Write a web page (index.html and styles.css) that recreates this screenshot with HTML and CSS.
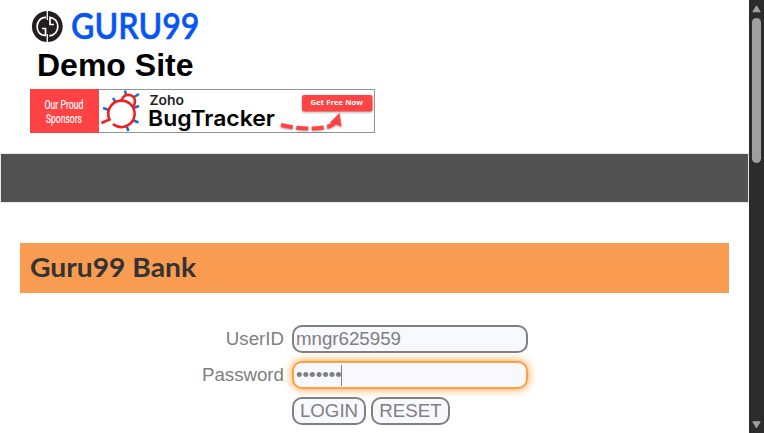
FILE: index.html
```html
<!DOCTYPE html>
<html lang="en">
<head>
<meta charset="utf-8">
<title>Guru99 Bank Home Page</title>
<link rel="stylesheet" href="styles.css">
</head>
<body>
<div class="window">
  <div class="page">
    <header class="header">
      <svg class="logo" width="180" height="44" viewBox="0 0 180 44">
        <circle cx="17.300" cy="26.500" r="15.400" fill="#231f20"/>
        <path d="M17.300 10.500V20M17.300 34V43" stroke="#fff" stroke-width="1.300"/>
        <path d="M16 17.300C4.500 17 4 36 15.500 35.500V28.500H12" fill="none" stroke="#fff" stroke-width="1.700"/>
        <path d="M19.300 35.800C30.500 35 30.500 18.500 20 17.300V24.500H24" fill="none" stroke="#fff" stroke-width="1.700"/>
        <text class="brand" x="41" y="38.500" textLength="128.500" lengthAdjust="spacingAndGlyphs">GURU99</text>
      </svg>
      <h1 class="demo">Demo Site</h1>
      <svg class="banner" width="345" height="44" viewBox="0 0 345 44">
        <rect x=".5" y=".5" width="344" height="43" fill="#fff" stroke="#939393"/>
        <rect width="69" height="44" fill="#ff4345"/>
        <g class="sponsor">
          <text x="14.500" y="19.500" textLength="39" lengthAdjust="spacingAndGlyphs">Our Proud</text>
          <text x="16" y="34" textLength="36" lengthAdjust="spacingAndGlyphs">Sponsors</text>
        </g>
        <g fill="none" stroke-width="2.600">
          <path d="M83 9l2.500 4M95 1.500l1 4.500M109 5l-5 3M73 19l6 2M109 17l-5.500 2M108.500 33.500l-6-2.500M98.500 42l-2-5" stroke="#1c73bd"/>
          <path d="M71.500 34l8-3.500a13.200 13.200 0 1 1 3.500 4.500M91.500 12.500c1-9 13-8.500 13.500-.5 0 3-1 5-2.500 6" stroke="#ed2024"/>
        </g>
        <text class="zoho" x="119.500" y="16" textLength="34.500" lengthAdjust="spacingAndGlyphs">Zoho</text>
        <text class="tracker" x="118" y="37.300" textLength="127" lengthAdjust="spacingAndGlyphs">BugTracker</text>
        <rect class="shadow" x="272" y="6" width="70.500" height="16.500" rx="2" fill="#ff4345"/>
        <text class="cta" x="280.500" y="16.300" textLength="52.500" lengthAdjust="spacingAndGlyphs">Get Free Now</text>
        <g class="shadow">
          <path d="M251 36q25 6 46 2 7-1.500 10-7" fill="none" stroke="#ff4345" stroke-width="4" stroke-dasharray="12 3.500"/>
          <path d="M309.500 24l-9.500 9.500 11.500 4z" fill="#ff4345"/>
        </g>
      </svg>
    </header>
    <nav class="nav"></nav>
    <div class="title">
      <svg width="180" height="50" viewBox="0 0 180 50">
        <text class="bank" x="10" y="34" textLength="166" lengthAdjust="spacingAndGlyphs">Guru99 Bank</text>
      </svg>
    </div>
    <form class="login">
      <label class="label">UserID</label>
      <div class="field">mngr625959</div>
      <label class="label">Password</label>
      <div class="field focused"><span class="dots">•••••••</span><span class="caret"></span></div>
      <div class="actions">
        <button type="button" class="button save">LOGIN</button>
        <button type="button" class="button clear">RESET</button>
      </div>
    </form>
  </div>
  <div class="scrollbar">
    <svg width="9" height="8" viewBox="0 0 9 8"><path d="M4.500.8L8.200 6.800H.8z" fill="#9f9f9f" stroke="#9f9f9f" stroke-linejoin="round"/></svg>
    <div class="thumb"></div>
    <svg class="down" width="9" height="8" viewBox="0 0 9 8"><path d="M4.500 6.800L8.200.8H.8z" fill="#9f9f9f" stroke="#9f9f9f" stroke-linejoin="round"/></svg>
  </div>
</div>
</body>
</html>
```
FILE: styles.css
```css
* { box-sizing: border-box; }
body { margin: 0; background: #fff; overflow: hidden; font-family: "Liberation Sans", Arial, sans-serif; }
.window { display: flex; width: 764px; height: 433px; }
.page { width: 749px; height: 433px; }
.header { height: 153px; padding-left: 30px; }
.logo, .banner { display: block; overflow: visible; }
.brand { font: 600 35.500px Lato, sans-serif; fill: #0755f5; stroke: #0755f5; stroke-width: .5px; stroke-linejoin: round; }
.demo { height: 45px; margin: 0; padding-left: 7px; font-size: 32px; line-height: 42px; font-weight: 700; color: #000; white-space: nowrap; }
.sponsor { font: 400 12px Roboto, sans-serif; fill: #fff; stroke: #fff; stroke-width: .15px; }
.zoho { font: 600 13px Inter, sans-serif; fill: #222; }
.tracker { font: 600 22px Inter, sans-serif; fill: #000; }
.cta { font: 700 7.500px "Open Sans", sans-serif; fill: #fff; }
.shadow { filter: drop-shadow(0 1px 1px #0005); }
.nav { height: 50px; border: 1px solid #e7e7e7; background: #525252; }
.title { height: 50px; margin: 40px 20px 0; background: #f99b50; }
.title svg { display: block; }
.bank { font: 700 26px Lato, sans-serif; fill: #333; }
.login { display: grid; grid-template-columns: 284px 236px; column-gap: 8px; row-gap: 8px; padding-top: 32px; font-size: 18.700px; color: #808080; }
.label { text-align: right; line-height: 27px; }
.field { display: flex; align-items: center; height: 28px; padding: 0 2px; border: 2px solid #808080; border-radius: 10px; background: #f8f8ff; line-height: 24px; }
.focused { border-color: #ffa042; box-shadow: 0 0 10px #ff9632; }
.dots { width: 45px; white-space: nowrap; }
.caret { width: 1px; height: 21px; background: #808080; }
.actions { grid-column: 2; display: flex; gap: 5px; }
.button { height: 28px; padding: 0; border: 2px solid #808080; border-radius: 10px; background: #f8f8ff; color: #808080; font: 18.700px/24px "Liberation Sans", Arial, sans-serif; }
.save { width: 74px; }
.clear { width: 79px; }
.scrollbar { display: flex; flex-direction: column; align-items: center; width: 15px; height: 433px; padding: 5px 0 4px; background: #2c2c2c; }
.thumb { width: 9px; height: 145px; margin-top: 5px; border-radius: 5px; background: #9f9f9f; }
.down { margin-top: auto; }
```
